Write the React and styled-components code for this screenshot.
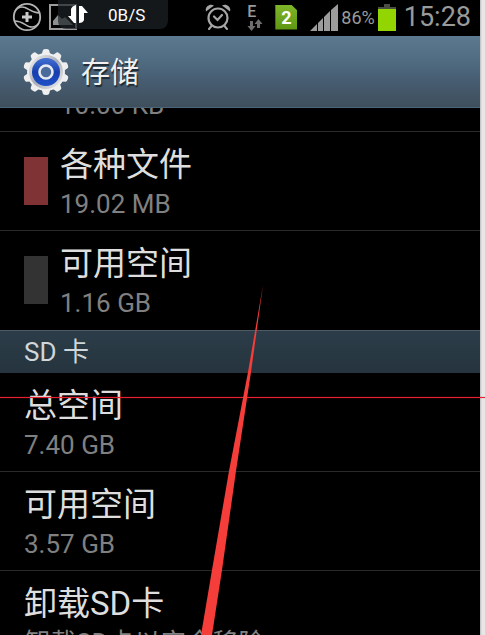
import styled, { createGlobalStyle } from "styled-components";

const usage = [
  { name: "各种文件", size: "19.02 MB", color: "#7f3334" },
  { name: "可用空间", size: "1.16 GB", color: "#333333" },
];

const sdCard = [
  { name: "总空间", size: "7.40 GB" },
  { name: "可用空间", size: "3.57 GB" },
  { name: "卸载SD卡", size: "卸载SD卡以安全移除" },
];

const teeth = [0, 36, 72, 108, 144, 180, 216, 252, 288, 324];

const PlusIcon = () => (
  <svg width='30' height='30' viewBox='0 0 30 30' fill='none'>
    <circle cx='15' cy='15' r='13.2' stroke='#b4b4b4' strokeWidth='1.8' />
    <path
      d='M3 9C6 5 10 4.500 13 5.500C17 7 20 11 27.500 11M27 21C24 25 20 25.500 17 24.500C13 23 10 19 2.500 19'
      stroke='#b4b4b4'
      strokeWidth='1.4'
    />
    <path d='M15 10V20M10 15H20' stroke='#c8c8c8' strokeWidth='3' />
  </svg>
);

const PictureIcon = () => (
  <svg width='28' height='26' viewBox='0 0 28 26'>
    <rect
      x='1'
      y='1'
      width='26'
      height='24'
      fill='none'
      stroke='#9c9c9c'
      strokeWidth='2'
    />
    <path d='M4 21V17L9 11L13 15L16 13L24 21Z' fill='#8c8f90' />
  </svg>
);

const TrafficIcon = () => (
  <svg width='22' height='19' viewBox='0 0 22 19' fill='#ffffff'>
    <path d='M4 4Q5 1 9 0V18H7L1 11H4Z' />
    <path d='M12 1H15L21 8H17V15Q16 18 12 18Z' />
  </svg>
);

const AlarmIcon = () => (
  <svg width='26' height='26' viewBox='0 0 26 26' fill='none'>
    <g stroke='#a6a6a6' strokeLinecap='round'>
      <circle cx='13' cy='14' r='9.5' strokeWidth='2.2' />
      <path d='M9 12.5L12.5 16L17 11' strokeWidth='2.2' />
      <path d='M6.5 22L4 25M19.5 22L22 25' strokeWidth='2' />
    </g>
    <path
      d='M1 7.5C-.5 3 4.5-1 9 1.5ZM25 7.5C26.5 3 21.5-1 17 1.5Z'
      fill='#a6a6a6'
    />
  </svg>
);

const DataArrows = () => (
  <svg width='16' height='12' viewBox='0 0 16 12' fill='#6e6e6e'>
    <path d='M3 2H6V7H8.5L4.5 12L.5 7H3Z' />
    <path d='M10 9H13V5H15.5L11.5 0L7.5 5H10Z' />
  </svg>
);

const SignalIcon = () => (
  <svg width='28' height='27' viewBox='0 0 28 27' fill='#9c9c9c'>
    <path d='M0 27L7 20V27Z' />
    <path d='M8 19L13 14V27H8Z' />
    <path d='M14 13L20 7V27H14Z' />
    <path d='M21 6L28 0V27H21Z' />
  </svg>
);

const BatteryIcon = () => (
  <svg width='18' height='27' viewBox='0 0 18 27'>
    <path d='M6 0H12V3H18V5H0V3H6Z' fill='#4a4d42' />
    <rect y='5' width='18' height='22' fill='#93d500' />
  </svg>
);

const GearIcon = () => (
  <svg width='46' height='48' viewBox='-23 -24 46 48'>
    <defs>
      <linearGradient id='metal' x1='0' y1='0' x2='1' y2='1'>
        <stop offset='0' stopColor='#f4f4f4' />
        <stop offset='0.5' stopColor='#a9adb4' />
        <stop offset='1' stopColor='#f1f1f1' />
      </linearGradient>
      <linearGradient id='blue' x1='0' y1='0' x2='0' y2='1'>
        <stop offset='0' stopColor='#4470d4' />
        <stop offset='0.5' stopColor='#163fae' />
        <stop offset='1' stopColor='#2050c8' />
      </linearGradient>
    </defs>
    <g fill='#efefef'>
      {teeth.map((angle) => (
        <path
          key={angle}
          d='M-4.5-17L-3-22Q-2.5-23 0-23T3-22L4.5-17Z'
          transform={`rotate(${angle})`}
        />
      ))}
      <circle r='19' />
    </g>
    <circle r='17' fill='url(#metal)' />
    <circle r='14' fill='url(#blue)' />
    <circle r='6.5' fill='#4a6c9c' stroke='#e6e9f0' strokeWidth='2.6' />
  </svg>
);

const StorageRow = ({ name, size, color }) => (
  <Row>
    {color ? <Swatch $color={color} /> : null}
    <RowText>
      <RowTitle>{name}</RowTitle>
      <RowSize>{size}</RowSize>
    </RowText>
  </Row>
);

const App = () => {
  return (
    <Page>
      <GlobalStyle />
      <Screen>
        <StatusBar>
          <PlusIcon />
          <PictureIcon />
          <SpeedPill>
            <TrafficIcon />
            <span>0B/S</span>
          </SpeedPill>
          <StatusRight>
            <AlarmIcon />
            <Network>
              <span>E</span>
              <DataArrows />
            </Network>
            <SimBadge>2</SimBadge>
            <SignalIcon />
            <Percent>86%</Percent>
            <BatteryIcon />
            <Clock>15:28</Clock>
          </StatusRight>
        </StatusBar>
        <Header>
          <GearIcon />
          <h1>存储</h1>
        </Header>
        <main>
          <ScrolledRow>
            <RowSize>10.00 KB</RowSize>
          </ScrolledRow>
          <List>
            {usage.map((item) => (
              <StorageRow key={item.name} {...item} />
            ))}
          </List>
          <SectionTitle>SD 卡</SectionTitle>
          <List>
            {sdCard.map((item) => (
              <StorageRow key={item.name} {...item} />
            ))}
          </List>
        </main>
      </Screen>
      <RedLine />
      <Pointer viewBox='0 0 64 350'>
        <path
          d='M62 0L50 87L35 186L21 285L11 350H0L11 285L28 186L47 87Z'
          fill='#f53d3a'
        />
      </Pointer>
    </Page>
  );
};

const GlobalStyle = createGlobalStyle`
  * {
    box-sizing: border-box;
  }
  body {
    margin: 0;
    background-color: #000;
    font-family: Roboto, "Noto Sans CJK SC", sans-serif;
  }
  h1, h2, h3, p, ul {
    margin: 0;
    padding: 0;
    font-weight: 400;
  }
  svg {
    display: block;
    flex-shrink: 0;
  }
`;

const Page = styled.div`
  position: relative;
  height: 100vh;
  overflow: hidden;
  padding-right: 5px;
  background: linear-gradient(to left, #e8e6e7 3px, #bdbdbd 5px);
`;

const Screen = styled.div`
  height: 100%;
  overflow: hidden;
  background-color: #000;
`;

const StatusBar = styled.div`
  position: relative;
  display: flex;
  align-items: center;
  gap: 7px;
  height: 36px;
  padding: 0 9px 2px 12px;
`;

const SpeedPill = styled.div`
  position: absolute;
  top: 0;
  left: 58px;
  display: flex;
  align-items: center;
  gap: 19px;
  width: 110px;
  height: 29px;
  padding-left: 9px;
  border-radius: 0 0 8px 8px;
  background-color: rgba(28, 34, 38, 0.7);
  color: #fff;
  font-size: 17px;
`;

const StatusRight = styled.div`
  display: flex;
  align-items: center;
  margin-left: auto;
  color: #9a9a9a;
`;

const Network = styled.div`
  display: flex;
  flex-direction: column;
  margin: 0 12px 0 16px;
  font-size: 16px;
  font-weight: 500;
  line-height: 15px;
`;

const SimBadge = styled.div`
  width: 22px;
  height: 25px;
  margin-right: 13px;
  background: linear-gradient(#7fb52a, #5f9612);
  clip-path: polygon(0 0, 72% 0, 100% 24%, 100% 100%, 0 100%);
  color: #fff;
  font-size: 18px;
  font-weight: 700;
  line-height: 25px;
  text-align: center;
`;

const Percent = styled.span`
  margin: 0 3px;
  font-size: 18px;
`;

const Clock = styled.span`
  margin-left: 8px;
  font-size: 27px;
  line-height: 32px;
`;

const Header = styled.header`
  display: flex;
  align-items: center;
  gap: 12px;
  height: 72px;
  padding-left: 23px;
  border-bottom: 1px solid #4a6478;
  background: linear-gradient(#5b7990, #526e84 30%, #465c70 65%, #3f4f5c);
  h1 {
    padding-top: 2px;
    color: #f0f0f0;
    font-size: 29px;
    line-height: 40px;
    text-shadow: 1px 2px 1px #1e2830;
  }
`;

const List = styled.ul`
  list-style: none;
`;

const Row = styled.li`
  display: flex;
  align-items: center;
  gap: 12px;
  height: 99px;
  padding-left: 24px;
  border-bottom: 1px solid #2a2a2a;
  &:last-child {
    border-bottom-color: transparent;
  }
`;

const ScrolledRow = styled.div`
  display: flex;
  align-items: flex-end;
  height: 24px;
  padding: 0 0 7px 60px;
  border-bottom: 1px solid #2a2a2a;
  overflow: hidden;
`;

const Swatch = styled.span`
  width: 24px;
  height: 48px;
  background-color: ${({ $color }) => $color};
`;

const RowText = styled.div`
  padding-top: 6px;
`;

const RowTitle = styled.h3`
  color: #dedede;
  font-size: 33px;
  line-height: 40px;
`;

const RowSize = styled.p`
  color: #808080;
  font-size: 26px;
  line-height: 38px;
`;

const SectionTitle = styled.h2`
  height: 43px;
  padding-left: 24px;
  border-top: 1px solid #4c5a62;
  background: linear-gradient(#2c3d49, #25343e);
  color: #d0d6da;
  font-size: 26px;
  line-height: 42px;
`;

const RedLine = styled.div`
  position: absolute;
  top: 397px;
  left: 0;
  right: 0;
  height: 1px;
  background-color: #e6202e;
  box-shadow: 0 0 1px #e6202e;
`;

const Pointer = styled.svg`
  position: absolute;
  top: 285px;
  left: 201px;
  width: 64px;
  height: 350px;
`;

export default App;
